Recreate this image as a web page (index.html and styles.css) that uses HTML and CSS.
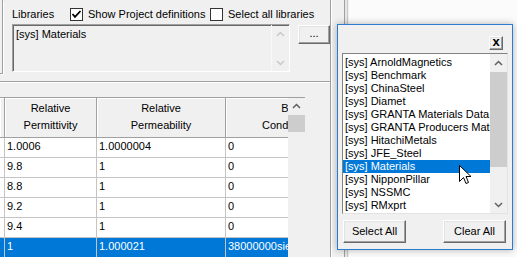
FILE: index.html
```html
<!DOCTYPE html>
<html>
<head>
<meta charset="utf-8">
<link rel="stylesheet" href="styles.css">
</head>
<body>
<div class="desk">
  <div class="main">
    <div class="content">
      <div class="top">
        <div class="leftbox"></div>
        <div class="libs">
          <div class="libs-head">
            <span class="lbl">Libraries</span>
            <span class="chk chk1"><span class="box"><svg width="11" height="11" viewBox="0 0 11 11"><path d="M1.5,5 L4,7.8 L9.5,2" fill="none" stroke="#000" stroke-width="1.8"/></svg></span>Show Project definitions</span>
            <span class="chk"><span class="box"></span>Select all libraries</span>
          </div>
          <div class="libs-body">
            <div class="liblist">
              <div class="liblist-items">[sys] Materials</div>
              <div class="dscroll">
                <svg width="17" height="17" viewBox="0 0 17 17"><polyline points="5,10 8.5,6.5 12,10" fill="none" stroke="#c8c8c8" stroke-width="1.5"/></svg>
                <svg width="17" height="17" viewBox="0 0 17 17"><polyline points="5,7 8.5,10.5 12,7" fill="none" stroke="#c8c8c8" stroke-width="1.5"/></svg>
              </div>
            </div>
            <div class="btn dots">...</div>
          </div>
        </div>
      </div>
      <div class="sep"></div>
      <div class="gridwrap">
        <div class="viewport">
          <div class="grid">
            <div class="hc"></div>
            <div class="hc">Relative<br>Permittivity</div>
            <div class="hc">Relative<br>Permeability</div>
            <div class="hc">Bulk<br>Conductivity</div>

            <div class="c"></div><div class="c">1.0006</div><div class="c">1.0000004</div><div class="c">0</div>
            <div class="c"></div><div class="c">9.8</div><div class="c">1</div><div class="c">0</div>
            <div class="c"></div><div class="c">8.8</div><div class="c">1</div><div class="c">0</div>
            <div class="c"></div><div class="c">9.2</div><div class="c">1</div><div class="c">0</div>
            <div class="c"></div><div class="c">9.4</div><div class="c">1</div><div class="c">0</div>
            <div class="c s"></div><div class="c s">1</div><div class="c s">1.000021</div><div class="c s">38000000siemens/m</div>
          </div>
        </div>
        <div class="gscroll">
          <svg width="17" height="17" viewBox="0 0 17 17"><polyline points="5,10 8.5,6.5 12,10" fill="none" stroke="#606060" stroke-width="1.5"/></svg>
          <div class="gthumb"></div>
        </div>
      </div>
    </div>
    <div class="gap"></div>
    <div class="main-edge"></div>
  </div>

  <div class="popup">
    <div class="popup-top"><div class="btn close"><span>x</span></div></div>
    <div class="plist">
      <div class="pitems">
        <div class="pitem">[sys] ArnoldMagnetics</div>
        <div class="pitem">[sys] Benchmark</div>
        <div class="pitem">[sys] ChinaSteel</div>
        <div class="pitem">[sys] Diamet</div>
        <div class="pitem">[sys] GRANTA Materials Data for Simulation</div>
        <div class="pitem">[sys] GRANTA Producers Materials</div>
        <div class="pitem">[sys] HitachiMetals</div>
        <div class="pitem">[sys] JFE_Steel</div>
        <div class="pitem sel">[sys] Materials</div>
        <div class="pitem">[sys] NipponPillar</div>
        <div class="pitem">[sys] NSSMC</div>
        <div class="pitem">[sys] RMxprt</div>
      </div>
      <div class="pscroll">
        <svg width="17" height="17" viewBox="0 0 17 17"><polyline points="5,10 8.5,6.5 12,10" fill="none" stroke="#606060" stroke-width="1.5"/></svg>
        <div class="pthumb"></div>
        <svg class="pdown" width="17" height="17" viewBox="0 0 17 17"><polyline points="5,7 8.5,10.5 12,7" fill="none" stroke="#606060" stroke-width="1.5"/></svg>
      </div>
    </div>
    <div class="pbtns">
      <div class="btn pbtn">Select All</div>
      <div class="btn pbtn">Clear All</div>
    </div>
  </div>

  <svg class="cursor" width="13" height="21" viewBox="0 0 13 21"><path d="M0.5,0.5 L0.5,16.5 L4.5,12.5 L7,18.5 L9.5,17.5 L7,11.5 L12,11.5 Z" fill="#fff" stroke="#000" stroke-linejoin="miter"/></svg>
</div>
</body>
</html>
```

FILE: styles.css
```css
body {
  margin: 0;
  background: #fbfbfb;
  font-family: "Liberation Sans", Arial, sans-serif;
  font-size: 11px;
  color: #000;
}
.desk {
  position: relative;
  width: 517px;
  height: 257px;
  overflow: hidden;
}
.main {
  display: flex;
  width: 349px;
  height: 257px;
  background: #f0f0f0;
}
.content {
  width: 330px;
  height: 257px;
  border-right: 1px solid #a0a0a0;
  box-shadow: 1px 0 0 #ffffff;
  flex: none;
}
.gap {
  width: 13px;
  flex: none;
}
.main-edge {
  width: 2px;
  flex: none;
  border-left: 1px solid #a0a0a0;
  border-right: 1px solid #c8c8c8;
  background: #e6e6e6;
}
.top {
  display: flex;
  height: 81px;
}
.leftbox {
  flex: none;
  width: 2px;
  height: 73px;
  border-right: 1px solid #a0a0a0;
  border-bottom: 1px solid #a0a0a0;
  box-shadow: 1px 1px 0 #ffffff;
}
.libs {
  margin-left: 9px;
  padding-top: 8px;
}
.libs-head {
  display: flex;
  height: 13px;
  line-height: 13px;
  white-space: nowrap;
}
.lbl {
  width: 58px;
}
.chk {
  display: flex;
  align-items: center;
  gap: 5px;
}
.chk1 {
  width: 140px;
}
.box {
  width: 11px;
  height: 11px;
  border: 1px solid #333333;
  background: #ffffff;
  display: block;
  flex: none;
}
.box svg {
  display: block;
}
.libs-body {
  display: flex;
  margin-top: 3px;
}
.liblist {
  width: 276px;
  height: 46px;
  border: 1px solid;
  border-color: #a0a0a0 #ffffff #ffffff #a0a0a0;
  box-shadow: inset 1px 1px 0 #696969;
  display: flex;
  background: #f0f0f0;
}
.liblist-items {
  flex: 1;
  padding: 3px 0 0 3px;
  line-height: 13px;
}
.dscroll {
  width: 17px;
  display: flex;
  flex-direction: column;
  justify-content: space-between;
  padding: 1px 0 0 0;
  border-left: 1px solid #f8f8f8;
}
.dscroll svg {
  display: block;
}
.btn {
  box-sizing: border-box;
  background: #f0f0f0;
  border: 1px solid;
  border-color: #ffffff #696969 #696969 #ffffff;
  box-shadow: inset -1px -1px 0 #a0a0a0, inset 1px 1px 0 #e3e3e3;
  text-align: center;
}
.dots {
  margin-left: 8px;
  margin-top: 1px;
  width: 32px;
  height: 19px;
  line-height: 15px;
}
.sep {
  height: 1px;
  background: #a0a0a0;
  border-bottom: 1px solid #ffffff;
}
.gridwrap {
  margin-top: 14px;
  display: flex;
  width: 305px;
  border-top: 1px solid #a0a0a0;
}
.viewport {
  width: 288px;
  height: 159px;
  overflow: hidden;
  background: #ffffff;
  flex: none;
}
.grid {
  display: grid;
  grid-template-columns: 5px 92px 129px 133px;
  width: 359px;
}
.hc {
  box-sizing: border-box;
  height: 40px;
  background: #f0f0f0;
  border-right: 1px solid #a0a0a0;
  border-bottom: 1px solid #a0a0a0;
  box-shadow: inset 1px 1px 0 #ffffff;
  text-align: center;
  line-height: 17px;
  padding-top: 2px;
  white-space: nowrap;
  overflow: hidden;
}
.c {
  box-sizing: border-box;
  height: 20px;
  line-height: 17px;
  padding-left: 2px;
  border-right: 1px solid #c4c4c4;
  border-bottom: 1px solid #c4c4c4;
  white-space: nowrap;
  overflow: hidden;
}
.c.s {
  background: #0078d7;
  color: #ffffff;
}
.gscroll {
  width: 17px;
  background: #f0f0f0;
}
.gscroll svg {
  display: block;
}
.gthumb {
  margin-top: 0;
  height: 17px;
  background: #cdcdcd;
}
.popup {
  position: absolute;
  left: 337px;
  top: 24px;
  width: 174px;
  height: 224px;
  border: 1px solid #2b7bd0;
  background: #f0f0f0;
  box-shadow: 0 0 7px rgba(0, 0, 0, 0.3);
  display: flex;
  flex-direction: column;
}
.popup-top {
  display: flex;
  justify-content: flex-end;
  padding: 11px 9px 0 0;
}
.close {
  width: 14px;
  height: 14px;
  display: flex;
  align-items: center;
  justify-content: center;
  font-weight: bold;
  font-size: 13px;
}
.close span {
  display: block;
  line-height: 10px;
  height: 9px;
  margin-top: -3px;
}
.plist {
  margin: 3px 4px 0 4px;
  height: 161px;
  box-sizing: border-box;
  border: 1px solid;
  border-color: #828282 #e3e3e3 #e3e3e3 #828282;
  background: #ffffff;
  display: flex;
}
.pitems {
  width: 147px;
  padding-top: 2px;
  overflow: hidden;
  flex: none;
}
.pitem {
  height: 13px;
  line-height: 13px;
  padding-left: 2px;
  white-space: nowrap;
  overflow: hidden;
}
.pitem.sel {
  background: #0078d7;
  color: #ffffff;
}
.pscroll {
  width: 17px;
  background: #f0f0f0;
  display: flex;
  flex-direction: column;
  padding-top: 1px;
}
.pscroll svg {
  display: block;
  flex: none;
}
.pthumb {
  height: 95px;
  background: #cdcdcd;
}
.pdown {
  margin-top: auto;
}
.pbtns {
  display: flex;
  justify-content: space-between;
  padding: 0 6px 0 5px;
  margin-top: 6px;
}
.pbtn {
  width: 63px;
  height: 23px;
  line-height: 20px;
}
.cursor {
  position: absolute;
  left: 459px;
  top: 165px;
}
```
